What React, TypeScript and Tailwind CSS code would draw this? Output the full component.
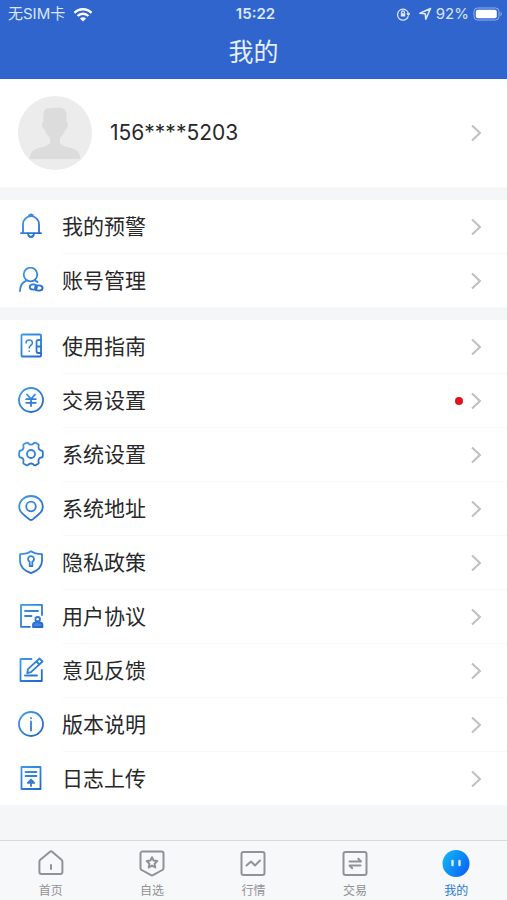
import type { ReactNode } from "react"

type Item = { label: string; icon: ReactNode; dot?: boolean }

function MenuIcon({ children }: { children: ReactNode }) {
    return (
        <svg viewBox="0 0 26 28" className="w-[26px] h-7 shrink-0" fill="none" stroke="url(#blue)" strokeWidth="1.800" strokeLinecap="round" strokeLinejoin="round" aria-hidden="true">
            {children}
        </svg>
    )
}

const account: Item[] = [
    {
        label: "我的预警",
        icon: (
            <>
                <path d="M5 20V11.200a8 8 0 0 1 16 0V20M3 20.200h20M11 2.400l2-1 2 1" />
                <path d="M10 20.400c.2 2.600 1.200 3.600 3 3.600s2.800-1 3-3.600" />
            </>
        ),
    },
    {
        label: "账号管理",
        icon: (
            <>
                <circle cx="12.500" cy="7.500" r="6.800" />
                <path d="M2 24c0-5 2.200-8.600 6-10.200M17 13.500l2.500 1.500" />
                <ellipse cx="15.300" cy="20" rx="3.600" ry="2.600" />
                <ellipse cx="20.800" cy="21" rx="3.800" ry="2.600" />
            </>
        ),
    },
]

const settings: Item[] = [
    {
        label: "使用指南",
        icon: (
            <>
                <path d="M23 7V2.500a1 1 0 0 0-1-1H4.500a1 1 0 0 0-1 1v20a1 1 0 0 0 1 1H22a1 1 0 0 0 1-1V7" />
                <path d="M8 10c0-4 6.400-4 6.400 0 0 2.500-3.200 2.300-3.200 5M11.200 18v.2" strokeWidth="1.500" />
                <path d="M23 7h-2.500a2 2 0 0 0-2 2v4.500H23M18.500 13.500V18a2 2 0 0 0 2 2H23" />
            </>
        ),
    },
    {
        label: "交易设置",
        dot: true,
        icon: (
            <>
                <circle cx="13" cy="13" r="12" />
                <path d="M9 7.500l4 4.500 4-4.500M8.200 12.200h9.600M8.200 15.800h9.600M13 12v7" />
            </>
        ),
    },
    {
        label: "系统设置",
        icon: (
            <>
                <path d="M8.500 1.700c1-.3 1.500 0 2 .7 1 1.500 4 1.500 5 0 .5-.7 1-1 2-.7l2.700 1.600c.7.500.7 1.200.4 2-.7 2 .6 4 2.600 4.200 1 .2 1.600.7 1.600 1.600v3.800c0 .9-.6 1.400-1.600 1.600-2 .2-3.300 2.200-2.600 4.200.3.800.3 1.500-.4 2l-2.700 1.600c-1 .3-1.500 0-2-.7-1-1.500-4-1.500-5 0-.5.700-1 1-2 .7l-2.700-1.600c-.7-.5-.7-1.200-.4-2 .7-2-.6-4-2.600-4.200-1-.2-1.600-.7-1.600-1.600v-3.800c0-.9.600-1.400 1.600-1.600 2-.2 3.300-2.200 2.600-4.200-.3-.8-.3-1.500.4-2Z" />
                <circle cx="13" cy="13" r="4" />
            </>
        ),
    },
    {
        label: "系统地址",
        icon: (
            <>
                <path d="M13 25c-1.200 0-2-.9-3-1.800C5.500 19.500 1.200 17 1.200 11.600a11.800 10.600 0 0 1 23.600 0c0 5.400-4.300 7.900-8.800 11.600-1 .9-1.800 1.800-3 1.800Z" />
                <circle cx="13" cy="11.500" r="4.800" />
            </>
        ),
    },
    {
        label: "隐私政策",
        icon: (
            <>
                <path d="M13 2.200c3 2.200 6.500 2.800 11 3V12c0 6-4 9.500-11 12.200C6 21.500 2 18 2 12V5.200c4.500-.2 8-.8 11-3Z" />
                <path d="M11.700 12.800a3 3 0 1 1 2.600 0v4.400h-2.600Z" />
            </>
        ),
    },
    {
        label: "用户协议",
        icon: (
            <>
                <path d="M24 12V1.800H3v22h9M7 8h13M7 13h6.500" />
                <circle cx="19.700" cy="16.300" r="2.300" />
                <path d="M15 24v-2.500c0-1.500 1.500-2 3.500-2v-1h2.400v1c2 0 3.500.5 3.500 2V24Z" fill="#4c86dc" />
            </>
        ),
    },
    {
        label: "意见反馈",
        icon: (
            <>
                <path d="M13.500 2H2.500v22h21.300V13M7 18.500h12" />
                <path d="M21.500 1.500l3 3L13 15.200l-3.800.8.800-3.800ZM18.500 4.500l3 3" />
            </>
        ),
    },
    {
        label: "版本说明",
        icon: (
            <>
                <circle cx="13" cy="13" r="12" />
                <path d="M13 10.500V19.500M13 7v.3" />
            </>
        ),
    },
    {
        label: "日志上传",
        icon: (
            <>
                <path d="M3.500 2h19v22h-19ZM7.500 7h11M7.500 11h11M13 15v6" />
                <path d="M9.800 17.800L13 14.700l3.200 3.100Z" fill="#3b80d8" />
            </>
        ),
    },
]

const tabs: Item[] = [
    {
        label: "首页",
        icon: <path d="M12.300 2.600a1.200 1.200 0 0 1 1.500 0l9.700 8.200c.6.500.9 1 .9 1.700V23a2 2 0 0 1-2 2h-19a2 2 0 0 1-2-2V12.500c0-.7.300-1.200.9-1.700ZM13 16v4" />,
    },
    {
        label: "自选",
        icon: (
            <>
                <path d="M3.500 2.500h19a2 2 0 0 1 2 2v14.700c0 .9-.400 1.400-1.200 1.800L14 26.200a2 2 0 0 1-2 0L2.700 21c-.8-.4-1.200-.9-1.200-1.800V4.500a2 2 0 0 1 2-2Z" />
                <path d="M13 8.200l1.600 3.400 3.700.5-2.700 2.600.7 3.700-3.300-1.800-3.300 1.800.7-3.700-2.700-2.600 3.700-.5Z" />
            </>
        ),
    },
    {
        label: "行情",
        icon: (
            <>
                <rect x="1.500" y="3" width="23" height="23" rx="2" />
                <path d="M6.500 16.500l4.500-4 4 4 5-5" />
            </>
        ),
    },
    {
        label: "交易",
        icon: (
            <>
                <rect x="1.500" y="3" width="23" height="23" rx="2" />
                <path d="M7.500 12.500h11.500l-2.700-2.700M18.500 16.500H7.500l2.700 2.700" />
            </>
        ),
    },
]

function Chevron() {
    return (
        <svg viewBox="0 0 12 18" className="w-3 h-[18px] shrink-0" fill="none" stroke="#bfbfc1" strokeWidth="2" aria-hidden="true">
            <path d="M1 1.500L9 9l-8 7.500" />
        </svg>
    )
}

function MenuList({ items }: { items: Item[] }) {
    return (
        <ul className="bg-white">
            {items.map((item, i) => (
                <li key={item.label} className="flex pl-[18px]">
                    <button className="flex items-center w-full text-left">
                        <MenuIcon>{item.icon}</MenuIcon>
                        <span className={i < items.length - 1 ? "flex flex-1 items-center gap-2 h-[54px] ml-[18px] pr-6 border-b border-[#f9f9fa]" : "flex flex-1 items-center gap-2 h-[53px] ml-[18px] pr-6"}>
                            <span className="flex-1 text-[21px] leading-8">{item.label}</span>
                            {item.dot && <span className="size-2 rounded-full bg-[#e1121c]" />}
                            <Chevron />
                        </span>
                    </button>
                </li>
            ))}
        </ul>
    )
}

function StatusBar() {
    return (
        <div className="grid grid-cols-3 items-center h-7 pl-2 pr-1 text-[15px] text-[#dce8ff]">
            <div className="flex items-center gap-2">
                <span>无SIM卡</span>
                <svg viewBox="0 0 20 15" className="w-5 h-[15px]" fill="none" stroke="#fff" strokeWidth="2.400" aria-hidden="true">
                    <path d="M1.500 5.800a12 12 0 0 1 17 0M4.600 9a7.600 7.600 0 0 1 10.800 0" />
                    <path d="M10 14.500l-3-3a4.200 4.200 0 0 1 6 0Z" fill="#fff" stroke="none" />
                </svg>
            </div>
            <span className="text-center font-semibold">15:22</span>
            <div className="flex items-center justify-end gap-1">
                <svg viewBox="0 0 14 14" className="size-3.5 mr-1" fill="none" stroke="currentColor" strokeWidth="1.300" aria-hidden="true">
                    <path d="M12.300 9.200A5.500 5.500 0 1 1 12.500 7M10.700 6.500l1.800 1.500 1.300-2M5.600 6.500V5.200a1.400 1.400 0 0 1 2.800 0v1.300" />
                    <rect x="4.800" y="6.300" width="4.400" height="3.200" fill="currentColor" stroke="none" />
                </svg>
                <svg viewBox="0 0 14 14" className="size-3.5" fill="none" stroke="currentColor" strokeWidth="1.600" strokeLinejoin="round" aria-hidden="true">
                    <path d="M12.500 1.500L2 6.300l5.300.5.500 5.400Z" />
                </svg>
                <span>92%</span>
                <svg viewBox="0 0 30 14" className="w-[30px] h-3.5" aria-hidden="true">
                    <rect x="1" y="1" width="25" height="12" rx="3.500" fill="none" stroke="#8fb0ee" />
                    <rect x="2.800" y="2.800" width="21" height="8.400" rx="2" fill="#fff" />
                    <path d="M27.500 4.800a2.500 2.500 0 0 1 0 4.400Z" fill="#8fb0ee" />
                </svg>
            </div>
        </div>
    )
}

export default function App() {
    return (
        <div className="flex flex-col min-h-screen bg-[#f5f6f8] text-[#28282a] font-[Inter,'Noto_Sans_CJK_SC',sans-serif]">
            <svg className="absolute size-0" aria-hidden="true">
                <defs>
                    <linearGradient id="blue" gradientUnits="userSpaceOnUse" x1="0" y1="0" x2="24" y2="28">
                        <stop offset="0" stopColor="#3fa0e8" />
                        <stop offset="1" stopColor="#2160c8" />
                    </linearGradient>
                </defs>
            </svg>

            <header className="bg-[#3065cd]">
                <StatusBar />
                <h1 className="h-[51px] text-center text-[25px] leading-[48px] text-[#e6eeff]">我的</h1>
            </header>

            <main className="flex flex-col gap-[13px]">
                <button className="flex items-center h-[108px] pl-[18px] pr-6 bg-white text-left">
                    <svg viewBox="0 0 74 74" className="size-[74px]" aria-hidden="true">
                        <circle cx="37" cy="37" r="37" fill="#ececec" />
                        <path d="M28 12.500c5 .5 13-2 18 .5 3.500 3 2.500 8 2.500 13 2.500 0 2 7-1.500 8-1 4-3 6-5 8v5c3 4 9 4 14 6 4 1.500 6 5 6.500 10H11.500c.5-5 2.500-8.500 6.500-10 5-2 11-2 14-6v-5c-2-2-4-4-5-8-3.500-1-4-8-1.500-8 0-5-1-10 2.500-13.500Z" fill="#dcdcdc" />
                    </svg>
                    <span className="flex-1 ml-[18px] text-[21px]">156****5203</span>
                    <Chevron />
                </button>
                <MenuList items={account} />
                <MenuList items={settings} />
            </main>

            <nav className="grid grid-cols-5 mt-auto h-[60px] border-t border-[#d9dadd] bg-[#f7f8fa] text-xs text-[#909296]">
                {tabs.map((tab) => (
                    <button key={tab.label} className="flex flex-col items-center pt-2">
                        <svg viewBox="0 0 26 28" className="w-[26px] h-7" fill="none" stroke="currentColor" strokeWidth="2" strokeLinecap="round" strokeLinejoin="round" aria-hidden="true">
                            {tab.icon}
                        </svg>
                        <span className="mt-1 leading-5">{tab.label}</span>
                    </button>
                ))}
                <button className="flex flex-col items-center pt-2 text-[#2878d0]" aria-current="page">
                    <svg viewBox="0 0 28 28" className="size-7" aria-hidden="true">
                        <defs>
                            <linearGradient id="face" x1="0" y1="0.200" x2="1" y2="0.800">
                                <stop offset="0" stopColor="#12b4f8" />
                                <stop offset="1" stopColor="#0a62f5" />
                            </linearGradient>
                        </defs>
                        <circle cx="14" cy="14.500" r="13.500" fill="url(#face)" />
                        <path d="M10.500 12v4M17.500 12v4" stroke="#d8f2ff" strokeWidth="2.400" strokeLinecap="round" />
                    </svg>
                    <span className="mt-1 leading-5">我的</span>
                </button>
            </nav>
        </div>
    )
}
